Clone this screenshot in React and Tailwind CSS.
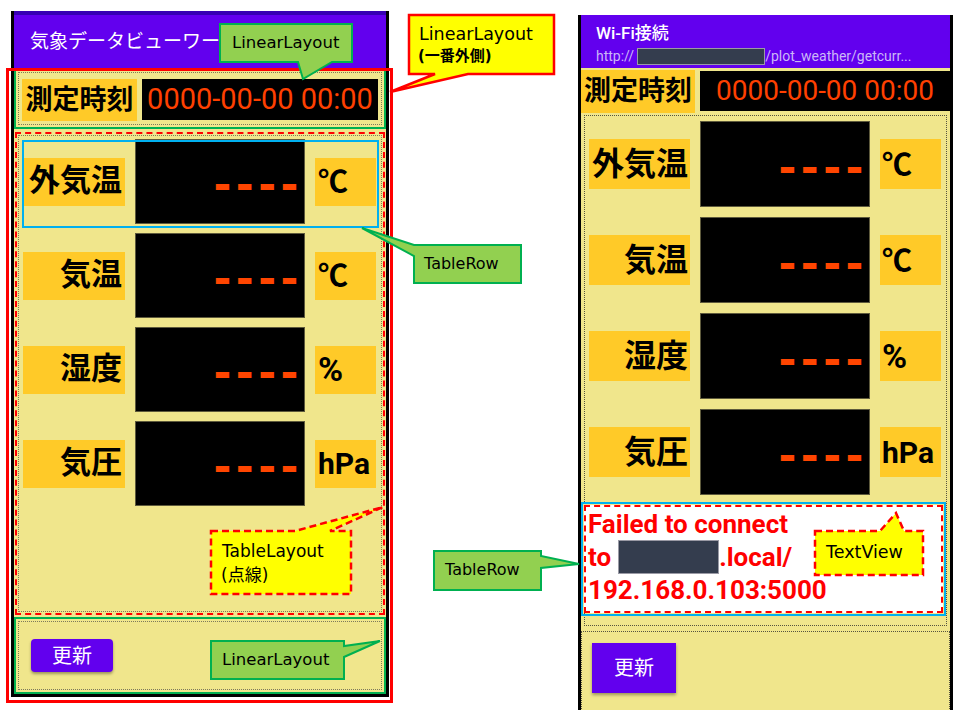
import React from "react";

const rows = [
  { label: "外気温", unit: "℃" },
  { label: "気温", unit: "℃" },
  { label: "湿度", unit: "%" },
  { label: "気圧", unit: "hPa" },
];

const Dashes = ({ w, h, pt }) => (
  <div className={`${w} ${h} ${pt} shrink-0 bg-black border border-[#5e5a3c] flex items-center justify-end pr-[5px]`}>
    <span className="font-['DejaVu_Sans_Mono',monospace] font-bold text-[43px] tracking-[-3.5px] leading-none text-[#ff4500]">----</span>
  </div>
);

const LeftPhone = () => (
  <div className="ml-[11px] mt-[11px] w-[378px] shrink-0 border-x-[3px] border-b-[3px] border-black flex flex-col">
    <div className="h-[4px] bg-[#3700b3]" />
    <div className="h-[53px] bg-[#6200ee] flex items-center pl-[16px] pt-[2px] text-white text-[19px] whitespace-nowrap overflow-hidden">
      気象データビューワー
    </div>
    <div className="bg-[#f0e68c] flex flex-col">
      <div className="h-[61px] border-2 border-[#00b050] p-[2px]">
        <div className="h-full border border-dotted border-[#7d7a5c] flex items-start pt-[6px] pl-[3px] gap-[5px]">
          <div className="w-[115px] h-[42px] bg-[#ffca28] flex items-center justify-center text-[27px] font-bold text-black">
            測定時刻
          </div>
          <div className="w-[236px] h-[41px] bg-black flex items-center justify-center text-[29px] text-[#ff4000]">
            0000-00-00 00:00
          </div>
        </div>
      </div>

      <div className="mt-[3px] mx-[1px] h-[483px] border-2 border-dashed border-[#ff0000] p-[1px]">
        <div className="h-full border border-dotted border-[#7d7a5c] pt-[3px] flex flex-col gap-[9px]">
          {rows.map((r) => (
            <div key={r.label} className="flex items-center h-[85px]">
              <div className="ml-[4px] w-[102px] h-[48px] bg-[#ffca28] flex items-center justify-end pr-[3px] text-[31px] font-bold text-black">
                {r.label}
              </div>
              <div className="ml-[10px]">
                <Dashes w="w-[170px]" h="h-[85px]" pt="pt-[5px]" />
              </div>
              <div className={`ml-[10px] w-[61px] h-[48px] bg-[#ffca28] flex items-center pl-[3px] font-bold text-black ${r.unit === "%" ? "text-[34px]" : "text-[30px]"}`}>
                {r.unit}
              </div>
            </div>
          ))}
        </div>
      </div>

      <div className="mt-[2px] h-[77px] border-2 border-[#00b050] p-[2px]">
        <div className="h-full border border-dotted border-[#7d7a5c] pl-[12px] pt-[17px]">
          <button className="w-[82px] h-[33px] rounded-[4px] bg-[#6200ee] text-white text-[20px] shadow-[0_2px_3px_rgba(0,0,0,0.35)] flex items-center justify-center">
            更新
          </button>
        </div>
      </div>
    </div>
  </div>
);

const RightPhone = () => (
  <div className="ml-[189px] mt-[15px] w-[375px] h-[700px] shrink-0 border-x-[3px] border-black flex flex-col bg-[#f0e68c]">
    <div className="h-[53px] shrink-0 bg-[#6200ee] pl-[15px] pt-[7px] text-white">
      <div className="text-[17px] font-medium leading-[22px]">Wi-Fi接続</div>
      <div className="mt-[3px] flex items-center text-[14px] leading-[18px] text-[#cbb7f7] whitespace-nowrap">
        http://
        <span className="ml-[3px] inline-block w-[128px] h-[17px] bg-[#343d4e] border border-[#9a9aa5]" />
        /plot_weather/getcurr...
      </div>
    </div>

    <div className="pt-[2px] flex items-start gap-[5px]">
      <div className="w-[114px] h-[43px] bg-[#ffca28] flex items-center justify-center text-[27px] font-bold text-black">
        測定時刻
      </div>
      <div className="mt-[1px] w-[250px] h-[40px] bg-black flex items-center justify-center text-[28px] text-[#ff4000]">
        0000-00-00 00:00
      </div>
    </div>

    <div className="mt-[2px] mx-[3px] border border-dotted border-[#55533f] pt-[5px] pb-[9px] flex flex-col">
      <div className="flex flex-col gap-[10px]">
        {rows.map((r) => (
          <div key={r.label} className="flex items-center h-[86px]">
            <div className="ml-[4px] w-[101px] h-[50px] bg-[#ffca28] flex items-center justify-end pr-[2px] text-[32px] font-bold text-black">
              {r.label}
            </div>
            <div className="ml-[10px]">
              <Dashes w="w-[170px]" h="h-[86px]" pt="pt-[6px]" />
            </div>
            <div className={`ml-[10px] w-[61px] h-[50px] bg-[#ffca28] flex items-center pl-[2px] font-bold text-black ${r.unit === "%" ? "text-[34px]" : "text-[30px]"}`}>
              {r.unit}
            </div>
          </div>
        ))}
      </div>
      <div className="mt-[7px] ml-[-4px] h-[114px] border-2 border-[#00b0f0] p-[1px]">
        <div className="h-full bg-white border-2 border-dashed border-[#ff0000] pl-[2px] pt-[1px] text-[26px] leading-[32px] font-bold text-[#ff0000]">
          <div>Failed to connect</div>
          <div className="flex items-center">
            to
            <span className="ml-[7px] inline-block w-[101px] h-[34px] bg-[#343d4e] border border-[#9a9aa5]" />
            .local/
          </div>
          <div>192.168.0.103:5000</div>
        </div>
      </div>
    </div>

    <div className="mt-[5px] flex-1 border border-dotted border-[#55533f] pl-[10px] pt-[11px]">
      <button className="w-[84px] h-[50px] bg-[#6200ee] text-white text-[20px] shadow-[0_2px_3px_rgba(0,0,0,0.35)] flex items-center justify-center">
        更新
      </button>
    </div>
  </div>
);

const Note = ({ className, children }) => (
  <div className={`absolute leading-none whitespace-nowrap text-black font-['DejaVu_Sans','Noto_Sans_CJK_JP',sans-serif] ${className}`}>
    {children}
  </div>
);

export default function App() {
  return (
    <div className="relative w-[962px] h-[710px] overflow-hidden bg-white font-['Roboto','Noto_Sans_CJK_JP',sans-serif]">
      <div className="flex items-start">
        <LeftPhone />
        <RightPhone />
      </div>

      {/* annotations */}
      <div className="absolute left-[6px] top-[68px] w-[387px] h-[635px] border-[3px] border-[#ff0000] pointer-events-none" />
      <div className="absolute left-[22px] top-[140px] w-[357px] h-[88px] border-2 border-[#00b0f0] pointer-events-none" />

      <svg className="absolute left-0 top-0 pointer-events-none" width="962" height="710">
        <path d="M220,24 H352 V62 H332 L303,79 L298,62 H220 Z" fill="#92d050" stroke="#00b050" strokeWidth="2" />
        <path d="M409,15 H554 V74 H468 L390,92 L435,74 H409 Z" fill="#ffff00" stroke="#ff0000" strokeWidth="2.5" />
        <path d="M362,228 L414,245 H521 V283 H414 V256 Z" fill="#92d050" stroke="#00b050" strokeWidth="2" />
        <path d="M211,531 H295 L383,507 L330,531 H351 V594 H211 Z" fill="#ffff00" stroke="#ff0000" strokeWidth="2.5" strokeDasharray="7 4" />
        <path d="M211,641 H344 V646 L380,641 L344,657 V679 H211 Z" fill="#92d050" stroke="#00b050" strokeWidth="2" />
        <path d="M434,551 H541 V556 L579,564 L541,568 V590 H434 Z" fill="#92d050" stroke="#00b050" strokeWidth="2" />
        <path d="M815,531 H880 L896,513 L904,531 H923 V575 H815 Z" fill="#ffff00" stroke="#ff0000" strokeWidth="2.5" strokeDasharray="7 4" />
      </svg>

      <Note className="left-[232px] top-[35px] text-[16.5px]">LinearLayout</Note>
      <Note className="left-[419px] top-[26px] text-[17.5px]">LinearLayout</Note>
      <Note className="left-[418px] top-[49px] text-[15px] font-bold">(一番外側)</Note>
      <Note className="left-[424px] top-[256px] text-[16px]">TableRow</Note>
      <Note className="left-[222px] top-[543px] text-[17px]">TableLayout</Note>
      <Note className="left-[221px] top-[567px] text-[17px]">(点線)</Note>
      <Note className="left-[222px] top-[652px] text-[16.5px]">LinearLayout</Note>
      <Note className="left-[445px] top-[562px] text-[16px]">TableRow</Note>
      <Note className="left-[826px] top-[544px] text-[17.5px]">TextView</Note>
    </div>
  );
}
